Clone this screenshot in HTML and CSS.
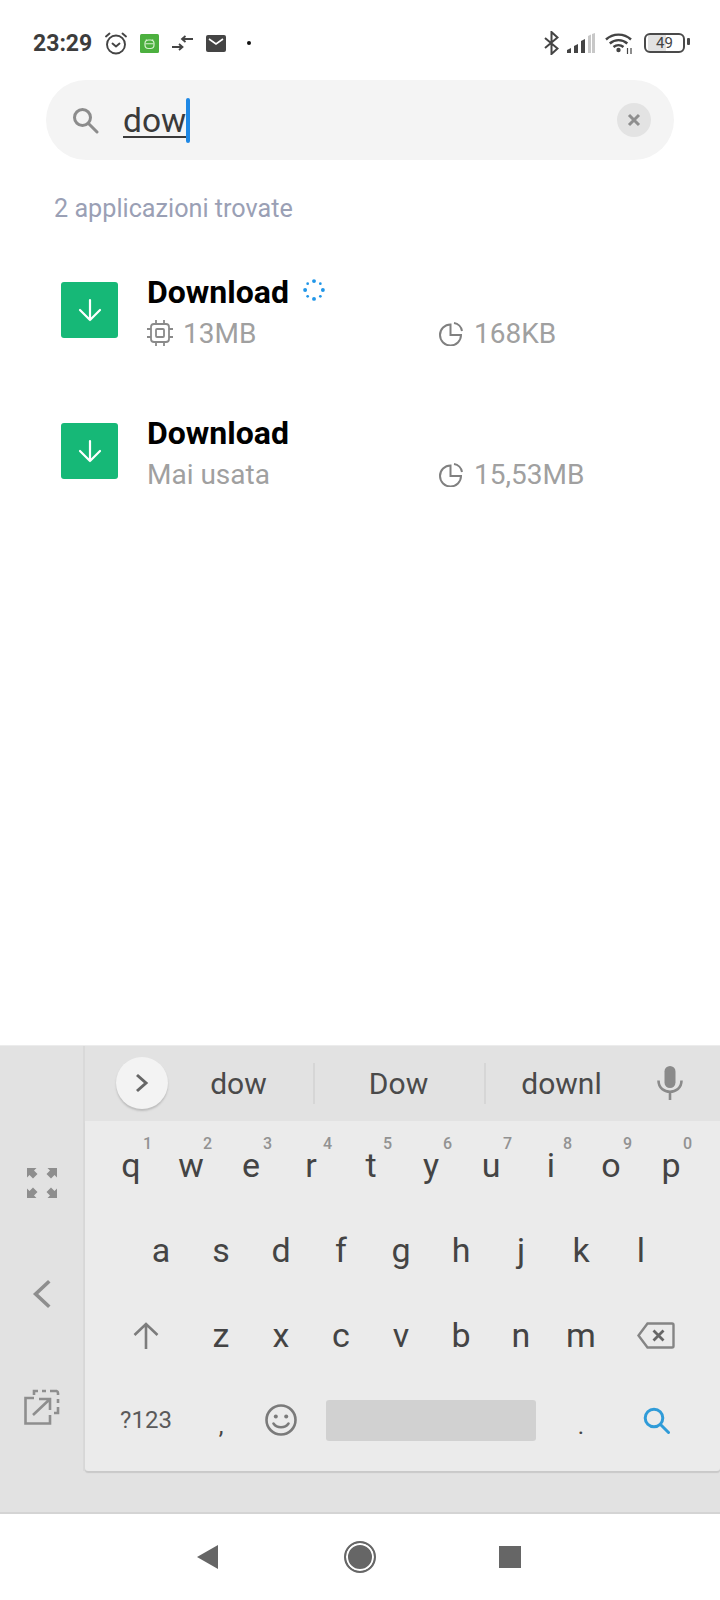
FILE: index.html
```html
<!DOCTYPE html>
<html lang="it">
	<head>
		<meta charset="UTF-8" />
		<meta name="viewport" content="width=device-width, initial-scale=1.0" />
		<link rel="stylesheet" href="styles.css">
		<title>Ricerca app</title>
	</head>
	<body>
		<div id="status">
			<div class="status-left">
				<span class="time">23:29</span>
				<svg class="ic-alarm" width="24" height="24" viewBox="0 0 24 24" fill="none" stroke="#444" stroke-width="1.9" stroke-linecap="round" stroke-linejoin="round"><circle cx="12" cy="13.5" r="9"/><path d="M8.5 12.5l3.5 3 3.5-3M2 5.5l3.5-3M22 5.5l-3.5-3"/></svg>
				<svg class="ic-bot" width="19" height="19" viewBox="0 0 19 19"><rect width="19" height="19" rx="1.5" fill="#4cb03f"/><rect x="5" y="6" width="9" height="8.5" rx="3.5" fill="none" stroke="#d6f0cf" stroke-width="1.2"/><path d="M5.5 9.8h8M6 5.5l1 1.5M13 5.5l-1 1.5" stroke="#d6f0cf" stroke-width="1.1"/></svg>
				<svg class="ic-arrows" width="21" height="16" viewBox="0 0 21 16" fill="none" stroke="#444" stroke-width="1.8"><path d="M0 12h10M7 9l3.5 3-3.500 3M21 4H10M13.500 1L10 4l3.500 3"/></svg>
				<svg class="ic-mail" width="20" height="17" viewBox="0 0 20 17"><rect width="20" height="17" rx="2" fill="#444"/><path d="M3 4l7 5 7-5" fill="none" stroke="#fff" stroke-width="1.6"/></svg>
				<span class="dot"></span>
			</div>
			<div class="status-right">
				<svg width="15" height="24" viewBox="0 0 15 24" fill="none" stroke="#444" stroke-width="2"><path d="M1 7l12.500 10.500L7.500 23V1l6 5.500L1 17"/></svg>
				<svg class="ic-signal" width="28" height="20" viewBox="0 0 28 20"><path d="M0 20v-3l4-2v5zM7 20v-7l4-2v9zM14 20V8l4-2v14z" fill="#444"/><path d="M21 20V3l3-1.500V20zM25 20V1l3-1v20z" fill="#c8c8c8"/></svg>
				<svg class="ic-wifi" width="28" height="22" viewBox="0 0 28 22" fill="none" stroke="#444" stroke-width="2.400"><path d="M1 7.500c7-6.500 18-6.500 25 0M4.800 11.500c5-4.500 12.500-4.500 17.500 0M8.500 15c3-2.500 7-2.500 10 0"/><circle cx="13.500" cy="18" r="2.200" fill="#444" stroke="none"/><path d="M22.500 16v6M26 16v6" stroke-width="1.200"/></svg>
				<div class="battery"><span>49</span></div>
			</div>
		</div>

		<div id="search">
			<svg width="28" height="28" viewBox="0 0 28 28" fill="none" stroke="#8c8c8c" stroke-width="3"><circle cx="11.500" cy="11.500" r="8"/><path d="M17.500 17.500L26 26" stroke-linecap="round"/></svg>
			<span class="query">dow</span>
			<span class="cursor"></span>
			<span class="clear">
				<svg width="14" height="14" viewBox="0 0 14 14" stroke="#8e8e8e" stroke-width="3"><path d="M2 2l10 10M12 2L2 12"/></svg>
			</span>
		</div>

		<div class="found">2 applicazioni trovate</div>

		<div id="apps">
			<div class="app">
				<div class="app-icon">
					<svg width="24" height="24" viewBox="0 0 24 24" fill="none" stroke="#fff" stroke-width="2.200" stroke-linecap="round" stroke-linejoin="round"><path d="M12 2v20M2 12l10 10 10-10"/></svg>
				</div>
				<div class="app-text">
					<div class="app-name">
						Download
						<svg class="spinner" width="22" height="22" viewBox="0 0 26 26" fill="#2196e8"><circle cx="13" cy="2.500" r="2.300"/><circle cx="20.500" cy="5.500" r="1.600"/><circle cx="23.500" cy="13" r="2.300"/><circle cx="20.500" cy="20.500" r="1.600"/><circle cx="13" cy="23.500" r="2.300"/><circle cx="5.500" cy="20.500" r="1.600"/><circle cx="2.500" cy="13" r="2.300"/><circle cx="5.500" cy="5.500" r="1.600"/></svg>
					</div>
					<div class="app-info">
						<div class="stat">
							<svg width="26" height="26" viewBox="0 0 26 26" fill="none" stroke="#8a8a8a" stroke-width="1.800"><rect x="4" y="4" width="18" height="18" rx="3"/><rect x="9" y="9" width="8" height="8" rx="1"/><path d="M9 0v4M17 0v4M9 22v4M17 22v4M0 9h4M0 17h4M22 9h4M22 17h4"/></svg>
							13MB
						</div>
						<div class="stat">
							<svg width="25" height="25" viewBox="0 0 25 25" fill="none" stroke="#808080" stroke-width="2"><path d="M11.500 3.500A10.500 10.500 0 1 0 22 14H11.500z"/><path d="M15 2a9.500 9.500 0 0 1 8 8"/></svg>
							168KB
						</div>
					</div>
				</div>
			</div>

			<div class="app">
				<div class="app-icon">
					<svg width="24" height="24" viewBox="0 0 24 24" fill="none" stroke="#fff" stroke-width="2.200" stroke-linecap="round" stroke-linejoin="round"><path d="M12 2v20M2 12l10 10 10-10"/></svg>
				</div>
				<div class="app-text">
					<div class="app-name">Download</div>
					<div class="app-info">
						<div class="stat">Mai usata</div>
						<div class="stat">
							<svg width="25" height="25" viewBox="0 0 25 25" fill="none" stroke="#808080" stroke-width="2"><path d="M11.500 3.500A10.500 10.500 0 1 0 22 14H11.500z"/><path d="M15 2a9.500 9.500 0 0 1 8 8"/></svg>
							15,53MB
						</div>
					</div>
				</div>
			</div>
		</div>

		<div id="keyboard">
			<div class="side">
				<svg class="side-expand" width="30" height="30" viewBox="0 0 30 30" fill="#8e8e8e"><path d="M0 0h9.500L7 2.500l3.500 3.500-4.500 4.500L2.500 7 0 9.500zM30 0v9.500L27.500 7 24 10.500 19.500 6 23 2.500 20.500 0zM0 30v-9.500L2.500 23 6 19.500l4.500 4.500L7 27.500 9.500 30zM30 30h-9.500l2.500-2.500L19.500 24l4.500-4.500 3.500 3.500 2.500-2.500z"/></svg>
				<svg class="side-back" width="20" height="30" viewBox="0 0 22 32" fill="none" stroke="#8e8e8e" stroke-width="4"><path d="M19 2L4 16l15 14"/></svg>
				<svg class="side-pop" width="36" height="36" viewBox="0 0 36 36" fill="none" stroke="#8e8e8e" stroke-width="2.600"><path d="M10 9H1.500v25.500H26V26"/><path d="M10 6V2h4M18 2h4M26 2h6.500a2 2 0 0 1 1.500 2v2M34 10v4M34 18v6h-4" /><path d="M9 26L26 10M15 10h11v11" /></svg>
			</div>
			<div class="main">
				<div class="suggest">
					<div class="more">
						<svg width="14" height="20" viewBox="0 0 14 20" fill="none" stroke="#666" stroke-width="3"><path d="M2 2l9 8-9 8"/></svg>
					</div>
					<span class="word word-1">dow</span>
					<i class="sep"></i>
					<span class="word word-2">Dow</span>
					<i class="sep"></i>
					<span class="word word-3">downl</span>
					<svg class="mic" width="26" height="34" viewBox="0 0 26 34" fill="none" stroke="#8a8a8a" stroke-width="2.600"><rect x="7.500" y="0" width="11" height="22" rx="5.500" fill="#8a8a8a" stroke="none"/><path d="M1.500 14.500c0 15 23 15 23 0M13 26v8"/></svg>
				</div>
				<div class="keys">
					<div class="row">
						<div class="key">q<sup>1</sup></div>
						<div class="key">w<sup>2</sup></div>
						<div class="key">e<sup>3</sup></div>
						<div class="key">r<sup>4</sup></div>
						<div class="key">t<sup>5</sup></div>
						<div class="key">y<sup>6</sup></div>
						<div class="key">u<sup>7</sup></div>
						<div class="key">i<sup>8</sup></div>
						<div class="key">o<sup>9</sup></div>
						<div class="key">p<sup>0</sup></div>
					</div>
					<div class="row row-mid">
						<div class="key">a</div>
						<div class="key">s</div>
						<div class="key">d</div>
						<div class="key">f</div>
						<div class="key">g</div>
						<div class="key">h</div>
						<div class="key">j</div>
						<div class="key">k</div>
						<div class="key">l</div>
					</div>
					<div class="row">
						<div class="key key-wide">
							<svg width="26" height="27" viewBox="0 0 26 27" fill="none" stroke="#7c7c7c" stroke-width="2.600"><path d="M13 27V2M1.500 13L13 2l11.500 11"/></svg>
						</div>
						<div class="key">z</div>
						<div class="key">x</div>
						<div class="key">c</div>
						<div class="key">v</div>
						<div class="key">b</div>
						<div class="key">n</div>
						<div class="key">m</div>
						<div class="key key-wide">
							<svg width="38" height="27" viewBox="0 0 38 27" fill="none" stroke="#858585" stroke-width="2.400"><path d="M10.500 1.500H35a1.500 1.500 0 0 1 1.500 1.500v21a1.500 1.500 0 0 1-1.500 1.500H10.500L1.500 13.500z"/><path d="M16.500 8.500l10 10M26.500 8.500l-10 10" stroke="#666" stroke-width="2.800"/></svg>
						</div>
					</div>
					<div class="row">
						<div class="key key-wide key-sym">?123</div>
						<div class="key key-punct">,</div>
						<div class="key">
							<svg width="32" height="32" viewBox="0 0 32 32" fill="none" stroke="#7a7a7a" stroke-width="2.600"><circle cx="16" cy="16" r="14.500"/><circle cx="10.800" cy="12.500" r="2" fill="#7a7a7a" stroke="none"/><circle cx="21.200" cy="12.500" r="2" fill="#7a7a7a" stroke="none"/><path d="M8.500 19.500c3.500 5 11.500 5 15 0" stroke-linecap="round"/></svg>
						</div>
						<div class="key-space"><span></span></div>
						<div class="key key-punct">.</div>
						<div class="key key-wide">
							<svg width="27" height="27" viewBox="0 0 27 27" fill="none" stroke="#2f9bd8" stroke-width="3"><circle cx="11" cy="11" r="8.800"/><path d="M17.500 17.500L25.500 25.500" stroke-linecap="round"/></svg>
						</div>
					</div>
				</div>
			</div>
		</div>

		<div id="nav">
			<div class="nav-cell"><span class="nav-back"></span></div>
			<div class="nav-cell"><span class="nav-home"></span></div>
			<div class="nav-cell"><span class="nav-recent"></span></div>
		</div>
	</body>
</html>
```

FILE: styles.css
```css
body {
	margin: 0;
	width: 720px;
	height: 1600px;
	display: flex;
	flex-direction: column;
	background-color: #fff;
	font-family: Roboto, sans-serif;
	overflow: hidden;
}

#status {
	box-sizing: border-box;
	height: 80px;
	padding: 6px 30px 0 33px;
	display: flex;
	align-items: center;
	justify-content: space-between;
}

.status-left,
.status-right {
	display: flex;
	align-items: center;
}

.time {
	font-size: 23px;
	font-weight: 700;
	color: #3c3c3c;
	width: 59px;
	margin-right: 12px;
}

.ic-bot {
	margin-left: 12px;
}

.ic-arrows {
	margin-left: 13px;
}

.ic-mail {
	margin-left: 13px;
}

.dot {
	width: 4px;
	height: 4px;
	border-radius: 50%;
	background-color: #111;
	margin-left: 21px;
}

.ic-signal {
	margin-left: 8px;
}

.ic-wifi {
	margin-left: 10px;
}

.battery {
	box-sizing: border-box;
	position: relative;
	width: 41px;
	height: 20px;
	margin: 0 5px 0 11px;
	display: flex;
	align-items: center;
	justify-content: center;
	border: 2.5px solid #4a4a4a;
	border-radius: 6px;
	background: linear-gradient(90deg, #fff 2px, #e2e2e2 2px, #e2e2e2 20px, #fff 20px);
	font-size: 15px;
	color: #444;

	&::after {
		content: "";
		position: absolute;
		right: -7px;
		top: 3px;
		width: 3px;
		height: 7px;
		border-radius: 1px;
		background-color: #4a4a4a;
	}
}

#search {
	box-sizing: border-box;
	height: 80px;
	margin: 0 46px;
	padding-left: 25px;
	display: flex;
	align-items: center;
	border-radius: 40px;
	background-color: #f4f4f4;
}

.query {
	margin-left: 24px;
	font-size: 33.5px;
	color: #3a3a3a;
	text-decoration: underline;
	text-decoration-thickness: 2px;
	text-underline-offset: 4px;
}

.cursor {
	width: 4px;
	height: 45px;
	border-radius: 2px;
	background-color: #1e88e5;
}

.clear {
	width: 34px;
	height: 34px;
	margin-left: auto;
	margin-right: 23px;
	display: flex;
	align-items: center;
	justify-content: center;
	border-radius: 50%;
	background-color: #e3e3e3;
}

.found {
	margin: 33px 0 49px 54px;
	font-size: 25.2px;
	line-height: 32px;
	color: #9aa0b5;
}

#apps {
	flex: 1;
}

.app {
	height: 141px;
	padding-left: 61px;
	display: flex;
	gap: 29px;
}

.app-icon {
	width: 57px;
	height: 56px;
	margin-top: 8px;
	display: flex;
	align-items: center;
	justify-content: center;
	border-radius: 3px;
	background-color: #16b877;
}

.app-name {
	height: 36px;
	display: flex;
	align-items: center;
	gap: 14px;
	font-size: 32px;
	font-weight: 700;
	color: #000;
}

.spinner {
	margin-bottom: 4px;
}

.app-info {
	margin-top: 5px;
	display: grid;
	grid-template-columns: 292px auto;
}

.stat {
	height: 36px;
	display: flex;
	align-items: center;
	gap: 10px;
	font-size: 28px;
	color: #a0a0a0;
}

#keyboard {
	box-sizing: border-box;
	height: 469px;
	padding-bottom: 41px;
	display: flex;
	background-color: #e2e2e2;
	border-top: 1px solid #ececec;
	border-bottom: 2px solid #d4d4d4;
}

.side {
	box-sizing: border-box;
	width: 85px;
	padding-top: 122px;
	display: flex;
	flex-direction: column;
	align-items: center;
	border-right: 2px solid #d9d9d9;
}

.side-back {
	margin-top: 81px;
}

.side-pop {
	margin-top: 80px;
}

.main {
	flex: 1;
	display: flex;
	flex-direction: column;
}

.suggest {
	height: 75px;
	display: flex;
	align-items: center;
	font-size: 30px;
	color: #4a4a4a;
}

.more {
	width: 52px;
	height: 52px;
	margin-left: 31px;
	display: flex;
	align-items: center;
	justify-content: center;
	border-radius: 50%;
	background-color: #f3f3f3;
	box-shadow: 0 2px 2px #bdbdbd;
}

.word {
	box-sizing: border-box;
	text-align: center;
}

.word-1 {
	width: 145px;
	padding-right: 4px;
}

.word-2 {
	width: 169px;
	padding-right: 2px;
}

.word-3 {
	width: 149px;
	padding-left: 2px;
}

.sep {
	width: 2px;
	height: 41px;
	background-color: #d6d6d6;
}

.mic {
	margin-left: 22px;
}

.keys {
	box-sizing: border-box;
	height: 352px;
	padding: 2px 18px 0 16px;
	border-radius: 0 0 3px 3px;
	background-color: #ebebeb;
	box-shadow: 0 2px 1px #c9c9c9;
}

.row {
	height: 85px;
	display: flex;
}

.row-mid {
	padding-left: 30px;
}

.key {
	position: relative;
	width: 60px;
	display: flex;
	align-items: center;
	justify-content: center;
	font-size: 34px;
	color: #444;

	sup {
		position: absolute;
		left: 42px;
		top: 12px;
		font-size: 16px;
		font-weight: 500;
		line-height: 18px;
		color: #929292;
	}
}

.key-wide {
	width: 90px;
}

.key-sym {
	font-size: 24px;
	color: #5a5a5a;
}

.key-punct {
	padding-top: 12px;
	box-sizing: border-box;
	font-size: 24px;
}

.key-space {
	width: 240px;
	padding: 0 15px;
	box-sizing: border-box;
	display: flex;
	align-items: center;

	span {
		width: 100%;
		height: 41px;
		border-radius: 3px;
		background-color: #d1d1d1;
	}
}

#nav {
	height: 86px;
	display: flex;
	justify-content: center;
	align-items: center;
}

.nav-cell {
	width: 150px;
	display: flex;
	justify-content: center;
}

.nav-back {
	width: 0;
	height: 0;
	margin-right: 6px;
	border-top: 12px solid transparent;
	border-bottom: 12px solid transparent;
	border-right: 21px solid #666;
}

.nav-home {
	box-sizing: border-box;
	width: 32px;
	height: 32px;
	border: 2px solid #666;
	border-radius: 50%;
	background-color: #666;
	box-shadow: inset 0 0 0 2px #fff;
}

.nav-recent {
	width: 22px;
	height: 22px;
	background-color: #666;
}
```
